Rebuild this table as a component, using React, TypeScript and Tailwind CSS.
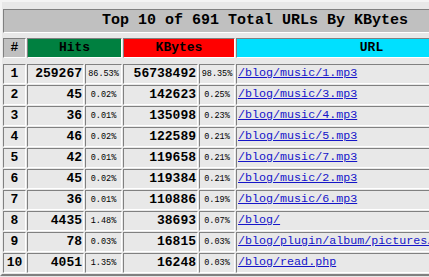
type Row = {
  hits: string;
  hitsPct: string;
  kbytes: string;
  kbPct: string;
  url: string;
};

const rows: Row[] = [
  { hits: "259267", hitsPct: "86.53%", kbytes: "56738492", kbPct: "98.35%", url: "/blog/music/1.mp3" },
  { hits: "45", hitsPct: "0.02%", kbytes: "142623", kbPct: "0.25%", url: "/blog/music/3.mp3" },
  { hits: "36", hitsPct: "0.01%", kbytes: "135098", kbPct: "0.23%", url: "/blog/music/4.mp3" },
  { hits: "46", hitsPct: "0.02%", kbytes: "122589", kbPct: "0.21%", url: "/blog/music/5.mp3" },
  { hits: "42", hitsPct: "0.01%", kbytes: "119658", kbPct: "0.21%", url: "/blog/music/7.mp3" },
  { hits: "45", hitsPct: "0.02%", kbytes: "119384", kbPct: "0.21%", url: "/blog/music/2.mp3" },
  { hits: "36", hitsPct: "0.01%", kbytes: "110886", kbPct: "0.19%", url: "/blog/music/6.mp3" },
  { hits: "4435", hitsPct: "1.48%", kbytes: "38693", kbPct: "0.07%", url: "/blog/" },
  { hits: "78", hitsPct: "0.03%", kbytes: "16815", kbPct: "0.03%", url: "/blog/plugin/album/pictures/1.jpg" },
  { hits: "4051", hitsPct: "1.35%", kbytes: "16248", kbPct: "0.03%", url: "/blog/read.php" },
];

// inset cell border, like an old <table border> cell
const cell = "h-[20px] flex items-center border border-t-[#808080] border-l-[#808080] border-b-white border-r-white";

export default function App() {
  return (
    <div className="w-[429px] h-[277px] overflow-hidden bg-[#e8e8e8] text-black" style={{ fontFamily: '"Liberation Mono", "DejaVu Sans Mono", monospace' }}>
      <div className="w-[510px] border-2 border-t-[#f4f4f4] border-l-[#f4f4f4] border-b-[#808080] border-r-[#808080] p-[1px]">
        <div className="grid grid-cols-[23px_57px_37px_75px_36px_1fr] gap-[1px]">
          <div className="col-span-6 h-[5px]" />

          {/* title */}
          <div className="col-span-6 h-[24px] flex items-center justify-center bg-[#c0c0c0] border border-t-[#808080] border-l-[#808080] border-b-white border-r-white text-[15px] font-bold">
            Top 10 of 691 Total URLs By KBytes
          </div>

          <div className="col-span-6 h-[3px]" />

          {/* column headers */}
          <div className={`${cell} justify-center bg-[#c0c0c0] text-[13px] font-bold`}>#</div>
          <div className={`${cell} col-span-2 justify-center bg-[#008040] text-[13px] font-bold`}>Hits</div>
          <div className={`${cell} col-span-2 justify-center bg-[#ff0000] text-[13px] font-bold`}>KBytes</div>
          <div className={`${cell} justify-center bg-[#00e0ff] text-[13px] font-bold`}>URL</div>

          <div className="col-span-6 h-[4px]" />

          {rows.map((r, i) => (
            <div key={i} className="contents">
              <div className={`${cell} justify-center text-[13px] font-bold`}>{i + 1}</div>
              <div className={`${cell} justify-end pr-[1px] text-[13px] font-bold`}>{r.hits}</div>
              <div className={`${cell} justify-center text-[8.5px]`}>{r.hitsPct}</div>
              <div className={`${cell} justify-end pr-[1px] text-[13px] font-bold`}>{r.kbytes}</div>
              <div className={`${cell} justify-center text-[8.5px]`}>{r.kbPct}</div>
              <div className={`${cell} pl-[1px] overflow-hidden whitespace-nowrap text-[11.7px]`}>
                <a href="#" className="text-[#1515c8] underline">{r.url}</a>
              </div>
            </div>
          ))}
        </div>
      </div>
    </div>
  );
}
